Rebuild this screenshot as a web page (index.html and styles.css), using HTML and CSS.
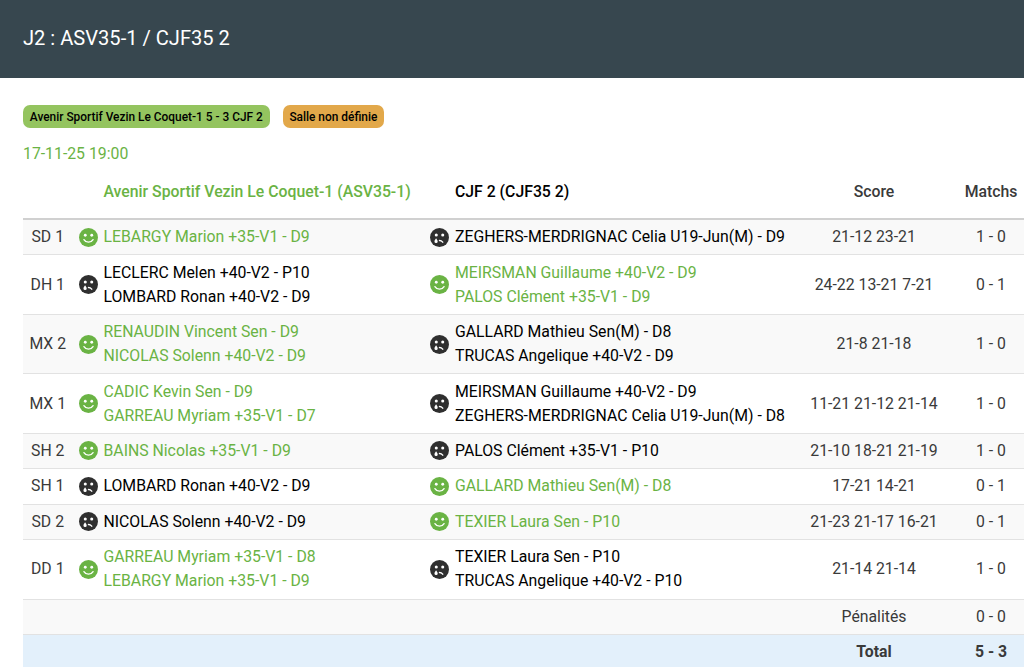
FILE: index.html
```html
<!DOCTYPE html>
<html lang="fr">
<head>
<meta charset="utf-8">
<title>J2 : ASV35-1 / CJF35 2</title>
<link rel="stylesheet" href="styles.css">
</head>
<body>
<svg class="defs" width="0" height="0" aria-hidden="true">
  <symbol id="win" viewBox="0 0 20 20">
    <circle cx="10" cy="10" r="10" fill="currentColor"/>
    <circle cx="6.600" cy="7.600" r="1.500" fill="#fff"/>
    <circle cx="13.400" cy="7.600" r="1.500" fill="#fff"/>
    <path d="M5.200 12.200c1.100 1.800 2.800 2.700 4.800 2.700s3.700-.9 4.800-2.700" fill="none" stroke="#fff" stroke-width="1.400" stroke-linecap="round"/>
  </symbol>
  <symbol id="lose" viewBox="0 0 20 20">
    <circle cx="10" cy="10" r="10" fill="currentColor"/>
    <circle cx="6.600" cy="7.400" r="1.600" fill="#fff"/>
    <circle cx="13.400" cy="7.400" r="1.600" fill="#fff"/>
    <path d="M10 13.200c1.200 0 2.400.5 3.400 1.700" fill="none" stroke="#fff" stroke-width="1.500" stroke-linecap="round"/>
    <path d="M6.400 10.800c1 1.400 1.700 2.400 1.700 3.300a1.700 1.700 0 0 1-3.400 0c0-.9.700-1.900 1.700-3.300z" fill="#fff"/>
  </symbol>
</svg>
<header class="topbar"><h1 class="title">J2 : ASV35-1 / CJF35 2</h1></header>
<main class="content">
  <div class="chips">
    <span class="chip chip-green">Avenir Sportif Vezin Le Coquet-1 5 - 3 CJF 2</span>
    <span class="chip chip-orange">Salle non définie</span>
  </div>
  <p class="date">17-11-25 19:00</p>
  <table class="results">
    <colgroup>
      <col class="c-label"><col class="c-icon"><col class="c-name"><col class="c-icon"><col class="c-name2"><col class="c-score"><col class="c-matchs">
    </colgroup>
    <thead>
      <tr>
        <th></th>
        <th></th>
        <th class="left win">Avenir Sportif Vezin Le Coquet-1 (ASV35-1)</th>
        <th></th>
        <th class="left team2">CJF 2 (CJF35 2)</th>
        <th>Score</th>
        <th>Matchs</th>
      </tr>
    </thead>
    <tbody>
      <tr>
        <td>SD 1</td>
        <td class="ic win"><svg class="face"><use href="#win"/></svg></td>
        <td class="name win">LEBARGY Marion +35-V1 - D9</td>
        <td class="ic lose"><svg class="face"><use href="#lose"/></svg></td>
        <td class="name">ZEGHERS-MERDRIGNAC Celia U19-Jun(M) - D9</td>
        <td>21-12 23-21</td>
        <td>1 - 0</td>
      </tr>
      <tr>
        <td>DH 1</td>
        <td class="ic lose"><svg class="face"><use href="#lose"/></svg></td>
        <td class="name">LECLERC Melen +40-V2 - P10<br>LOMBARD Ronan +40-V2 - D9</td>
        <td class="ic win"><svg class="face"><use href="#win"/></svg></td>
        <td class="name win">MEIRSMAN Guillaume +40-V2 - D9<br>PALOS Clément +35-V1 - D9</td>
        <td>24-22 13-21 7-21</td>
        <td>0 - 1</td>
      </tr>
      <tr>
        <td>MX 2</td>
        <td class="ic win"><svg class="face"><use href="#win"/></svg></td>
        <td class="name win">RENAUDIN Vincent Sen - D9<br>NICOLAS Solenn +40-V2 - D9</td>
        <td class="ic lose"><svg class="face"><use href="#lose"/></svg></td>
        <td class="name">GALLARD Mathieu Sen(M) - D8<br>TRUCAS Angelique +40-V2 - D9</td>
        <td>21-8 21-18</td>
        <td>1 - 0</td>
      </tr>
      <tr>
        <td>MX 1</td>
        <td class="ic win"><svg class="face"><use href="#win"/></svg></td>
        <td class="name win">CADIC Kevin Sen - D9<br>GARREAU Myriam +35-V1 - D7</td>
        <td class="ic lose"><svg class="face"><use href="#lose"/></svg></td>
        <td class="name">MEIRSMAN Guillaume +40-V2 - D9<br>ZEGHERS-MERDRIGNAC Celia U19-Jun(M) - D8</td>
        <td>11-21 21-12 21-14</td>
        <td>1 - 0</td>
      </tr>
      <tr>
        <td>SH 2</td>
        <td class="ic win"><svg class="face"><use href="#win"/></svg></td>
        <td class="name win">BAINS Nicolas +35-V1 - D9</td>
        <td class="ic lose"><svg class="face"><use href="#lose"/></svg></td>
        <td class="name">PALOS Clément +35-V1 - P10</td>
        <td>21-10 18-21 21-19</td>
        <td>1 - 0</td>
      </tr>
      <tr>
        <td>SH 1</td>
        <td class="ic lose"><svg class="face"><use href="#lose"/></svg></td>
        <td class="name">LOMBARD Ronan +40-V2 - D9</td>
        <td class="ic win"><svg class="face"><use href="#win"/></svg></td>
        <td class="name win">GALLARD Mathieu Sen(M) - D8</td>
        <td>17-21 14-21</td>
        <td>0 - 1</td>
      </tr>
      <tr>
        <td>SD 2</td>
        <td class="ic lose"><svg class="face"><use href="#lose"/></svg></td>
        <td class="name">NICOLAS Solenn +40-V2 - D9</td>
        <td class="ic win"><svg class="face"><use href="#win"/></svg></td>
        <td class="name win">TEXIER Laura Sen - P10</td>
        <td>21-23 21-17 16-21</td>
        <td>0 - 1</td>
      </tr>
      <tr>
        <td>DD 1</td>
        <td class="ic win"><svg class="face"><use href="#win"/></svg></td>
        <td class="name win">GARREAU Myriam +35-V1 - D8<br>LEBARGY Marion +35-V1 - D9</td>
        <td class="ic lose"><svg class="face"><use href="#lose"/></svg></td>
        <td class="name">TEXIER Laura Sen - P10<br>TRUCAS Angelique +40-V2 - P10</td>
        <td>21-14 21-14</td>
        <td>1 - 0</td>
      </tr>
      <tr>
        <td colspan="5"></td>
        <td>Pénalités</td>
        <td>0 - 0</td>
      </tr>
    </tbody>
    <tfoot>
      <tr>
        <td colspan="5"></td>
        <td>Total</td>
        <td>5 - 3</td>
      </tr>
    </tfoot>
  </table>
</main>
</body>
</html>
```
FILE: styles.css
```css
* { box-sizing: border-box; }
html, body { margin: 0; padding: 0; }
body {
  width: 1024px;
  height: 667px;
  overflow: hidden;
  background: #fff;
  color: #000;
  font-family: Roboto, "Liberation Sans", sans-serif;
  font-size: 15.8px;
  line-height: 24px;
}
.defs { position: absolute; }
.topbar {
  height: 78px;
  background: #37474f;
  display: flex;
  align-items: center;
  padding: 0 0 3px 23px;
}
.title {
  margin: 0;
  color: #fff;
  font-size: 20.100px;
  font-weight: 400;
}
.content { padding: 27px 0 0 23px; }
.chips { display: flex; gap: 13px; height: 23px; }
.chip {
  display: flex;
  align-items: center;
  height: 23px;
  padding: 0 6.800px;
  border-radius: 7px;
  font-size: 11.900px;
  font-weight: 500;
  color: #000;
}
.chip-green { background: #94c45f; }
.chip-orange { background: #e2a84a; }
.date { margin: 14px 0 0; color: #6ab344; height: 24px; }
.results {
  width: 1001px;
  margin-top: 9px;
  border-collapse: collapse;
  table-layout: fixed;
}
.c-label { width: 49.500px; }
.c-icon { width: 31px; }
.c-name { width: 320.500px; }
.c-name2 { width: 335px; }
.c-score { width: 168px; }
.c-matchs { width: 66px; }
th, td {
  padding: 5.220px 0;
  text-align: center;
  vertical-align: middle;
  color: #3a3a3a;
  font-weight: 400;
}
th {
  height: 44px;
  padding: 0 0 9px;
  font-weight: 500;
  border-bottom: 2px solid #d0d0d0;
}
tbody td { border-bottom: 1px solid #e2e2e2; }
tbody tr:nth-child(odd) { background: #f9f9f9; }
.results .left, .results .name { text-align: left; }
.results .name { color: #000; }
.results .team2 { color: #000; }
.results .win { color: #6ab344; }
.results .lose { color: #2f2f2f; }
.ic { line-height: 0; }
.face { width: 19px; height: 19px; display: block; margin: 0 auto; }
tfoot td {
  background: #e3f0fb;
  font-weight: 700;
  height: 33px;
}
```
